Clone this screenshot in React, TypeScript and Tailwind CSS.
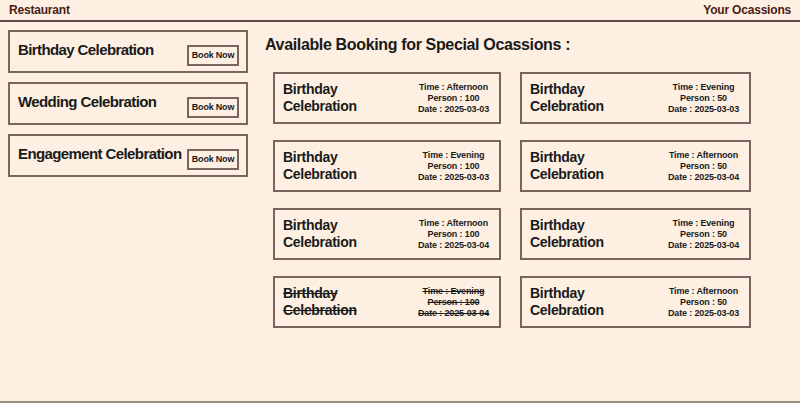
const occasions = ["Birthday Celebration", "Wedding Celebration", "Engagement Celebration"];

type Booking = { time: string; person: number; date: string; cancelled?: boolean };

const bookings: Booking[] = [
  { time: "Afternoon", person: 100, date: "2025-03-03" },
  { time: "Evening", person: 50, date: "2025-03-03" },
  { time: "Evening", person: 100, date: "2025-03-03" },
  { time: "Afternoon", person: 50, date: "2025-03-04" },
  { time: "Afternoon", person: 100, date: "2025-03-04" },
  { time: "Evening", person: 50, date: "2025-03-04" },
  { time: "Evening", person: 100, date: "2025-03-04", cancelled: true },
  { time: "Afternoon", person: 50, date: "2025-03-03" },
];

export default function App() {
  return (
    <div
      className="h-[403px] flex flex-col bg-[#fdf0e2] border-b-2 border-[#9a9080] text-[#1a1a1a]"
      style={{ fontFamily: '"Liberation Sans", Arial, sans-serif' }}
    >
      {/* Header */}
      <div className="h-[22px] flex items-center justify-between px-[9px] border-b-2 border-[#5e4a42] text-[#4a1c14] font-bold text-[12px] tracking-[-0.2px]">
        <span>Restaurant</span>
        <span>Your Ocassions</span>
      </div>

      <div className="flex gap-[17px] pl-[8px] pt-[8px]">
        {/* Left occasions list */}
        <div className="w-[240px] flex flex-col gap-[9px]">
          {occasions.map((o) => (
            <div
              key={o}
              className="h-[43px] border-2 border-[#7a645c] flex justify-between pl-[8px] pr-[7px] pt-[9px]"
            >
              <span className="font-bold text-[15px] leading-[18px] tracking-[-0.6px] whitespace-nowrap">{o}</span>
              <button className="mt-[4px] h-[21px] w-[52px] border-2 border-[#7a645c] text-[9px] font-bold leading-none tracking-[-0.2px] whitespace-nowrap">
                Book Now
              </button>
            </div>
          ))}
        </div>

        {/* Available bookings */}
        <div className="flex-1">
          <h2 className="font-bold text-[16px] leading-[20px] tracking-[-0.35px] mt-[5px]">
            Available Booking for Special Ocassions :
          </h2>
          <div className="grid grid-cols-[228px_231px] gap-x-[19px] gap-y-[16px] ml-[8px] mt-[17px]">
            {bookings.map((b, i) => (
              <div
                key={i}
                className={`h-[52px] border-2 border-[#7a645c] flex items-center justify-between pl-[8px] pr-[10px] ${
                  b.cancelled ? "line-through" : ""
                }`}
              >
                <div className="font-bold text-[14px] leading-[17px] tracking-[-0.3px]">
                  Birthday
                  <br />
                  Celebration
                </div>
                <div className="text-center font-bold text-[9px] leading-[11px] tracking-[-0.15px]">
                  <div>Time : {b.time}</div>
                  <div>Person : {b.person}</div>
                  <div>Date : {b.date}</div>
                </div>
              </div>
            ))}
          </div>
        </div>
      </div>
    </div>
  );
}
